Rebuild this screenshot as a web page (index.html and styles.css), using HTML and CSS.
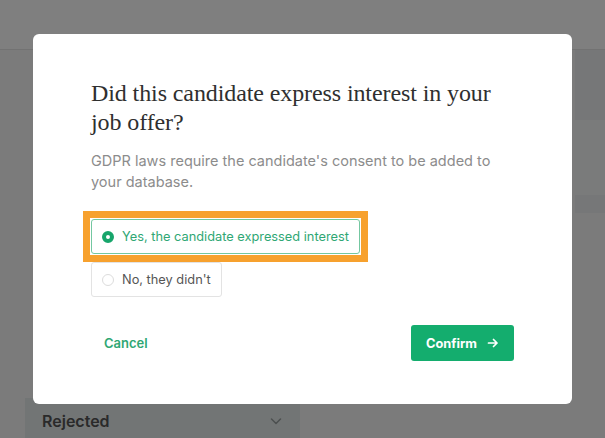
FILE: index.html
```html
<!DOCTYPE html>
<html>
<head>
  <meta charset="UTF-8">
  <meta name="viewport" content="width=device-width, initial-scale=1">
  <title>Candidate consent</title>
  <link rel="stylesheet" href="styles.css">
</head>
<body>
  <div class="page">
    <header class="topbar"></header>
    <div class="main">
      <aside class="pipeline">
        <div class="stage">
          <span>Rejected</span>
          <svg class="chevron" width="14" height="14" viewBox="0 0 14 14"><path d="M2.5 5l4.5 4.5 4.5-4.5" fill="none" stroke="#9aa0a0" stroke-width="1.6" stroke-linecap="round" stroke-linejoin="round"/></svg>
        </div>
      </aside>
      <section class="content">
        <div class="summary">
          <div class="card"></div>
        </div>
      </section>
    </div>
  </div>

  <div class="overlay">
    <div class="modal">
      <h2 class="title">Did this candidate express interest in your job offer?</h2>
      <p class="subtitle">GDPR laws require the candidate's consent to be added to your database.</p>
      <div class="options">
        <label class="option selected">
          <span class="radio"></span>
          Yes, the candidate expressed interest
        </label>
        <label class="option">
          <span class="radio"></span>
          No, they didn't
        </label>
      </div>
      <div class="actions">
        <button class="cancel">Cancel</button>
        <button class="confirm">Confirm
          <svg width="12" height="12" viewBox="0 0 12 12"><path d="M1.5 6h8.5M6.5 2.5L10 6l-3.5 3.5" fill="none" stroke="#fff" stroke-width="1.7" stroke-linecap="round" stroke-linejoin="round"/></svg>
        </button>
      </div>
    </div>
  </div>
</body>
</html>
```

FILE: styles.css
```css
* {
  margin: 0;
  padding: 0;
  box-sizing: border-box;
}
body {
  width: 605px;
  height: 438px;
  overflow: hidden;
  background: #f6f6f6;
  font-family: Inter, "Noto Sans", sans-serif;
}

/* page behind the dialog */
.page {
  height: 438px;
  display: flex;
  flex-direction: column;
}
.topbar {
  height: 50px;
  background: #fff;
  border-bottom: 1px solid #e4e4e4;
}
.main {
  flex: 1;
  display: flex;
}
.pipeline {
  width: 275px;
  margin-left: 25px;
  display: flex;
  flex-direction: column;
  justify-content: flex-end;
}
.stage {
  height: 40px;
  background: #e5ebeb;
  display: flex;
  align-items: center;
  justify-content: space-between;
  padding: 6px 17px 0 17px;
  font-size: 16px;
  font-weight: 600;
  color: #555;
}
.content {
  flex: 1;
}
.summary {
  margin-left: 275px;
  height: 163px;
  background: #eceff0;
  padding-top: 70px;
}
.card {
  height: 75px;
  background: #f5f6f6;
}

/* dialog */
.overlay {
  position: fixed;
  inset: 0;
  background: rgba(0, 0, 0, 0.5);
  display: flex;
  align-items: center;
  justify-content: center;
}
.modal {
  width: 539px;
  height: 370px;
  background: #fff;
  border-radius: 6px;
  padding: 45px 58px 0 58px;
}
.title {
  max-width: 412px;
  font-family: "Liberation Serif", "DejaVu Serif", serif;
  font-weight: 400;
  font-size: 24px;
  line-height: 29px;
  color: #2f2f2f;
  letter-spacing: -0.1px;
}
.subtitle {
  max-width: 410px;
  margin-top: 13px;
  font-size: 14.5px;
  line-height: 21px;
  color: #8c8c8c;
}
.options {
  margin-top: 27px;
  display: flex;
  flex-direction: column;
  align-items: flex-start;
  gap: 8px;
}
.option {
  height: 35px;
  display: flex;
  align-items: center;
  gap: 8px;
  padding: 0 10px;
  border: 1px solid #e3e3e3;
  border-radius: 3px;
  font-size: 12.8px;
  color: #555;
}
.option .radio {
  width: 12px;
  height: 12px;
  border-radius: 50%;
  border: 1px solid #dcdcdc;
}
.option.selected {
  position: relative;
  border-color: #74c7a1;
  color: #2fa774;
}
/* highlight frame drawn over the selected answer */
.option.selected::after {
  content: "";
  position: absolute;
  inset: -9px;
  border: 7px solid #f7a12e;
}
.option.selected .radio {
  border: 4px solid #17a56b;
  background: #fff;
}
.actions {
  margin-top: 28px;
  display: flex;
  justify-content: space-between;
  align-items: center;
}
.cancel {
  border: none;
  background: none;
  padding: 10px 13px;
  font-family: inherit;
  font-size: 13px;
  font-weight: 600;
  color: #2fa774;
}
.confirm {
  height: 36px;
  width: 103px;
  border: none;
  border-radius: 3px;
  background: #14ad6e;
  color: #fff;
  font-family: inherit;
  font-size: 12.8px;
  font-weight: 700;
  display: flex;
  align-items: center;
  gap: 10px;
  padding: 0 15px;
}
```
